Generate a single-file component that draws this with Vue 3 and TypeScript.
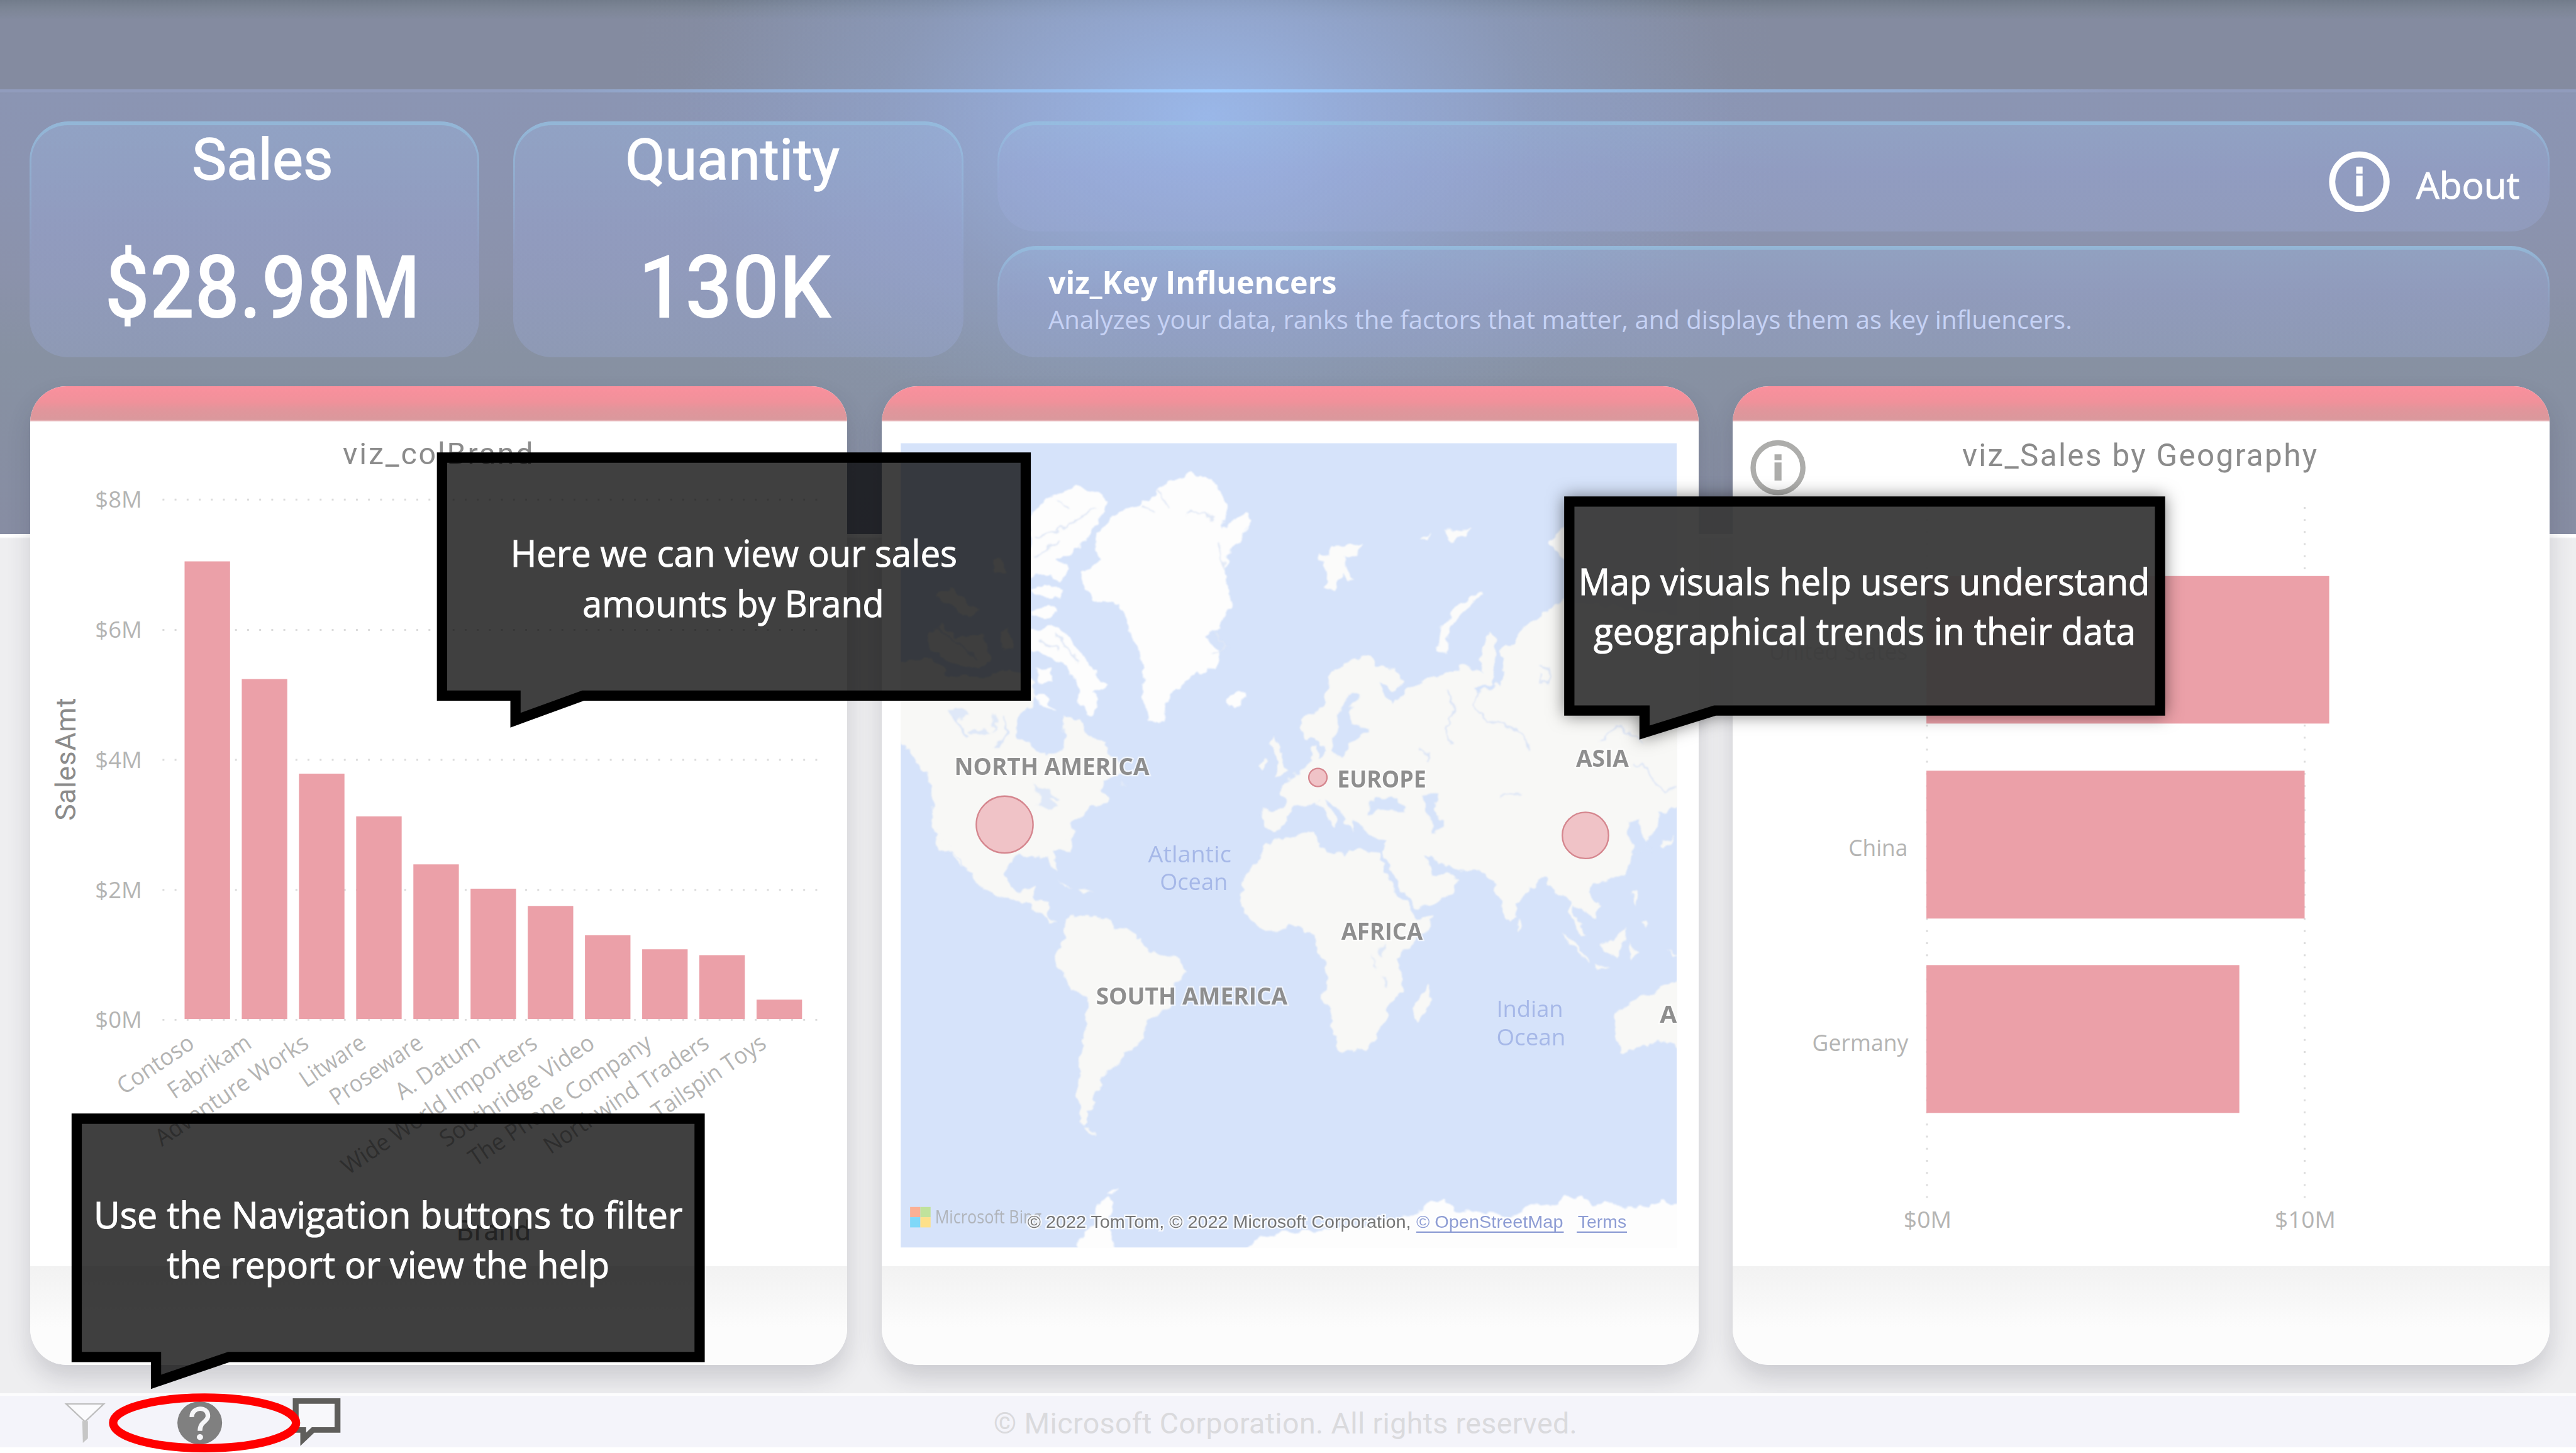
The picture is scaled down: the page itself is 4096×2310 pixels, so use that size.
<script setup lang="ts">
interface Label {
  t: string
  x: number
  y: number
  w: number
}
interface Callout {
  d: string
  cls: string
  lines: Label[]
}

// Advance widths, in em, for the slanted category labels
const advance: Record<string, number> = {
  C: 0.619, F: 0.488, W: 0.934, P: 0.56, T: 0.524, A: 0.645, D: 0.701, I: 0.266, S: 0.531, V: 0.621, N: 0.748, L: 0.471,
  a: 0.509, b: 0.588, c: 0.462, d: 0.588, e: 0.523, g: 0.588, h: 0.565, i: 0.242, k: 0.497, l: 0.242, m: 0.861, n: 0.565,
  o: 0.586, p: 0.588, r: 0.348, s: 0.424, t: 0.339, u: 0.565, v: 0.479, w: 0.723, y: 0.484, ' ': 0.274, '.': 0.217,
}
const widthOf = (t: string, size: number): number =>
  [...t].reduce((sum, ch) => sum + (advance[ch] ?? 0.55), 0) * size

const brands: { name: string; top: number }[] = [
  { name: 'Contoso', top: 959 },
  { name: 'Fabrikam', top: 1160 },
  { name: 'Adventure Works', top: 1321.5 },
  { name: 'Litware', top: 1394.5 },
  { name: 'Proseware', top: 1476.5 },
  { name: 'A. Datum', top: 1518 },
  { name: 'Wide World Importers', top: 1547.5 },
  { name: 'Southridge Video', top: 1597.5 },
  { name: 'The Phone Company', top: 1621.5 },
  { name: 'Northwind Traders', top: 1631.5 },
  { name: 'Tailspin Toys', top: 1707.5 },
]
const ticks: { t: string; y: number }[] = [
  { t: '$8M', y: 853.5 },
  { t: '$6M', y: 1076 },
  { t: '$4M', y: 1298 },
  { t: '$2M', y: 1520 },
  { t: '$0M', y: 1742 },
]

const countries: { label: Label; y: number; w: number; h: number }[] = [
  { label: { t: 'United States', x: 3022, y: 1127, w: 237 }, y: 984, w: 688, h: 252 },
  { label: { t: 'China', x: 3158, y: 1462, w: 101 }, y: 1316.5, w: 646, h: 252.5 },
  { label: { t: 'Germany', x: 3096, y: 1795, w: 164 }, y: 1648.5, w: 534.5, h: 252.5 },
]

const continents: Label[] = [
  { t: 'NORTH AMERICA', x: 1630, y: 1324, w: 333 },
  { t: 'EUROPE', x: 2284, y: 1345, w: 152 },
  { t: 'ASIA', x: 2692, y: 1310, w: 90 },
  { t: 'AFRICA', x: 2291, y: 1605.5, w: 139 },
  { t: 'SOUTH AMERICA', x: 1872, y: 1716, w: 327 },
  { t: 'A', x: 2835, y: 1747, w: 29 },
]
const oceans: Label[] = [
  { t: 'Atlantic', x: 1961, y: 1472.5, w: 142 },
  { t: 'Ocean', x: 1981, y: 1520, w: 116 },
  { t: 'Indian', x: 2556, y: 1737.5, w: 114 },
  { t: 'Ocean', x: 2556, y: 1785.5, w: 118 },
]
const bubbles = [
  { x: 1716, y: 1408.5, r: 48.5 },
  { x: 2251, y: 1328, r: 15.5 },
  { x: 2708, y: 1427, r: 39.5 },
]

const callouts: Callout[] = [
  {
    cls: 'plain',
    d: 'M755 781.5H1752V1188H996L880.5 1230V1188H755Z',
    lines: [
      { t: 'Here we can view our sales', x: 872, y: 968, w: 763 },
      { t: 'amounts by Brand', x: 995, y: 1054, w: 515 },
    ],
  },
  {
    cls: 'raised',
    d: 'M2680.5 856.5H3689.5V1213.5H2929L2809 1251V1213.5H2680.5Z',
    lines: [
      { t: 'Map visuals help users understand', x: 2696, y: 1016.5, w: 976 },
      { t: 'geographical trends in their data', x: 2722, y: 1101, w: 926 },
    ],
  },
  {
    cls: 'plain',
    d: 'M131 1910.5H1195V2317.5H391L266.5 2360V2317.5H131Z',
    lines: [
      { t: 'Use the Navigation buttons to filter', x: 160, y: 2098, w: 1006 },
      { t: 'the report or view the help', x: 285, y: 2183, w: 756 },
    ],
  },
]
</script>

<template>
  <div class="report">
    <header class="topbar"></header>

    <section class="summary">
      <div class="glass kpi">
        <svg viewBox="50 207 768 403">
          <text class="din kpi-name" x="327" y="305.500" textLength="241" lengthAdjust="spacingAndGlyphs">Sales</text>
          <text class="din kpi-value" x="178" y="542" textLength="539" lengthAdjust="spacingAndGlyphs">$28.98M</text>
        </svg>
      </div>
      <div class="glass kpi">
        <svg viewBox="877 207 768 403">
          <text class="din kpi-name" x="1068" y="305.500" textLength="366" lengthAdjust="spacingAndGlyphs">Quantity</text>
          <text class="din kpi-value" x="1090" y="542" textLength="330" lengthAdjust="spacingAndGlyphs">130K</text>
        </svg>
      </div>
      <div class="banners">
        <div class="glass banner">
          <svg viewBox="1702 207 2653 188">
            <circle cx="4030" cy="310" r="46.5" fill="none" stroke="#fff" stroke-width="10.5" />
            <path d="M4024.5 284h11v12h-11zM4024.5 299.500h11v35.500h-11z" fill="#fff" />
            <text class="ui bright" x="4127" y="339.500" font-size="63" textLength="177" lengthAdjust="spacingAndGlyphs">About</text>
          </svg>
        </div>
        <div class="glass banner">
          <svg viewBox="1702 420 2653 190">
            <text class="ui" x="1789" y="502" font-size="54" font-weight="700" fill="#fff" textLength="493" lengthAdjust="spacingAndGlyphs">viz_Key Influencers</text>
            <text class="ui" x="1789" y="562" font-size="44" fill="#c6d2f5" textLength="1750" lengthAdjust="spacingAndGlyphs">Analyzes your data, ranks the factors that matter, and displays them as key influencers.</text>
          </svg>
        </div>
      </div>
    </section>

    <main class="cards">
      <article class="card">
        <div class="stripe"></div>
        <svg class="body" viewBox="52 720 1395 1442">
          <text class="din" x="586" y="793" font-size="52" fill="#8b8b8b" textLength="325" lengthAdjust="spacing">viz_colBrand</text>
          <g v-for="k in ticks" :key="k.t">
            <line x1="278" :y1="k.y" x2="1398" :y2="k.y" class="grid" />
            <text class="ui tick" x="163" :y="k.y + 14" textLength="80" lengthAdjust="spacingAndGlyphs">{{ k.t }}</text>
          </g>
          <text class="din" transform="translate(129 1402) rotate(-90)" font-size="48" fill="#8b8b8b" textLength="210" lengthAdjust="spacing">SalesAmt</text>
          <g v-for="(b, i) in brands" :key="b.name">
            <rect :x="315.7 + i * 97.7" :y="b.top" width="77.700" :height="1740.5 - b.top" fill="#eba0a8" />
            <text
              class="ui tick"
              :transform="`translate(${335 + i * 97.7} 1788) rotate(-34) translate(${-widthOf(b.name, 40)} 0)`"
              :textLength="widthOf(b.name, 40)"
              lengthAdjust="spacingAndGlyphs"
            >{{ b.name }}</text>
          </g>
          <text class="din" x="780" y="2119" font-size="48" fill="#8b8b8b" textLength="127" lengthAdjust="spacing">Brand</text>
        </svg>
        <div class="base"></div>
      </article>

      <article class="card">
        <div class="stripe"></div>
        <svg class="body" viewBox="1506 720 1395 1442">
          <defs>
            <clipPath id="frame"><rect x="1538.500" y="757" width="1325.500" height="1374" /></clipPath>
            <filter id="coast" x="-5%" y="-5%" width="110%" height="110%">
              <feTurbulence type="fractalNoise" baseFrequency="0.06" numOctaves="2" seed="4" result="n" />
              <feDisplacementMap in="SourceGraphic" in2="n" scale="17" xChannelSelector="R" yChannelSelector="G" />
              <feGaussianBlur stdDeviation="1.2" />
            </filter>
          </defs>
          <g clip-path="url(#frame)">
            <rect x="1538" y="757" width="1326" height="1374" fill="#d6e3fa" />
            <g filter="url(#coast)" fill="#f8f8f6">
              <!-- North America and the Arctic -->
              <g transform="translate(1500 740) scale(.4464)">
                <path d="M60 880L200 860L260 920L400 940L500 900L600 950L590 1040L545 1070L528 1120L535 1160L590 1200L640 1230L690 1232L715 1200L705 1090L770 1095L800 1160L870 1180L890 1230L935 1295L900 1310L860 1330L850 1370L882 1400L820 1430L790 1460L745 1490L738 1600H235L210 1510L205 1350L180 1290L130 1240L100 1190L60 1130Z" />
                <path d="M190 780L240 730L300 780L400 770L430 860L400 900L300 890L200 820ZM220 620L280 590L330 640L390 680L340 700ZM460 760L490 740L520 820L480 830ZM440 490L470 480L490 530L450 540Z" />
                <path d="M580 300L650 250L750 205L830 220L885 260L850 320L790 410L740 460L690 480L735 520L700 565L660 540L580 545ZM590 600L640 580L705 605L690 625L600 620ZM590 680L660 655L685 685L640 708L590 700ZM580 750L700 745L740 800L800 870L840 940L880 970L820 990L842 1050L820 1080L770 1030L765 960L710 880L640 850L580 830ZM600 900L650 895L668 950L620 960ZM590 1000L640 1000L675 1060L640 1045Z" fill="#fdfdfd" />
                <path d="M1145 180L1200 150L1280 185L1325 240L1335 310L1310 370L1400 310L1435 330L1390 400L1335 470L1330 570L1352 660L1310 730L1250 780L1312 850L1290 900L1200 930L1115 1000L1090 1105L1035 1100L1015 1010L1010 860L965 760L945 690L900 640L825 645L790 590L770 535L850 490L830 410L900 310L1000 270L1060 240L1090 190ZM1330 1010L1380 985L1410 1010L1360 1055L1335 1045Z" fill="#fdfdfd" />
                <path d="M590 1350L640 1360L690 1395L660 1400L690 1440L650 1450L610 1420L625 1390ZM270 1060L330 1055L360 1075L290 1105ZM340 1140L400 1130L440 1150L350 1155ZM440 1065L455 1120L445 1150ZM925 1330L960 1345L935 1355Z" fill="#dfe8f8" />
                <path d="M210 740L380 860M480 1080L500 1150L440 1200M290 1090L340 1170" fill="none" stroke="#dbe5f8" stroke-width="9" />
                <path d="M600 400L690 370L760 330L830 290M600 470L650 440L700 410M690 250L730 290M1075 220L1110 290M1010 280L1060 310M1290 330L1230 300L1180 310M1330 520L1300 420M1290 760L1330 820L1270 850M610 790L690 830M680 770L760 870" fill="none" stroke="#dfe7f6" stroke-width="6" />
              </g>
              <g transform="translate(1500 1400) scale(.4464 .4974)">
                <path d="M208 -40L210 0L240 60L290 110L340 170L380 215L410 240L470 265L520 275L570 290L620 315L660 350L690 358L645 330L648 290L610 280L590 275L605 225L570 235L540 252L505 235L488 190L500 140L540 120L600 130L650 130L670 170L686 177L670 110L720 60L748 0V-40ZM680 203L745 238L720 232ZM765 240L800 238L825 248L780 250ZM280 100L325 160L300 145Z" />
                <path d="M710 350L740 330L800 330L870 340L920 375L990 390L1020 440L1080 465L1140 470L1182 515L1150 550L1125 580L1120 640L1030 690L1020 730L980 790L935 800L942 820L910 850L880 860L850 890L850 920L820 950L832 975L800 1010L800 1045L768 1042L765 940L775 800L795 700L803 620L740 580L700 520L680 480L690 440L717 400ZM800 1050L828 1085L805 1075Z" />
                <path d="M745 1490L800 1410L835 1380L840 1320L875 1297L905 1320L890 1360L885 1410L908 1490ZM870 1290L920 1255L900 1285ZM1425 1490L1440 1440L1600 1420V1490Z" fill="#fdfdfd" />
              </g>
              <!-- Europe and northern Asia -->
              <g transform="translate(2150 740) scale(.4783 .4464)">
                <path d="M10 1440L90 1440L95 1400L75 1350L150 1290L190 1255L185 1210L205 1195L215 1240L240 1215L200 1165L175 1175L155 1150L150 1100L230 1050L240 980L270 900L330 870L400 850L420 890L480 900L520 950L490 985L430 960L450 1000L480 1030L520 990L600 940L700 910L730 885L800 920L790 860L825 755L847 800L845 900L830 960L860 960L880 900L860 820L920 810L930 750L1000 700L1090 640L1520 700V1430L1430 1450L1425 1500L1380 1570L1350 1600H440L460 1560L420 1550L375 1520L340 1480L330 1525L300 1450L235 1400L285 1475L270 1510L210 1410L130 1430L110 1450L90 1500L60 1525L20 1510ZM55 1165L75 1210L105 1290L60 1315L70 1260L40 1200ZM18 1245L35 1255L20 1292L3 1270Z" />
                <path d="M212 460L250 470L270 430L375 425L350 475L300 470L310 505L345 560L320 565L300 540L265 600L240 590L245 540ZM580 410L615 380L610 410ZM670 365L700 380L765 365L720 405L680 420ZM640 830L650 750L700 670L800 600L802 615L710 700L675 770L675 845ZM1035 420L1070 365L1110 370V480L1070 470Z" fill="#fbfbfa" />
                <path d="M330 990L280 1080L285 1140L270 1170L265 1215L285 1240L322 1210L325 1185L400 1140L370 1120L330 1120L325 1060L355 1010ZM385 1460L420 1385L450 1400L480 1385L530 1450L450 1468ZM585 1390L640 1380L625 1440L660 1480L655 1530L610 1525L600 1450ZM1310 1490L1360 1480L1375 1540L1400 1600H1320ZM770 970L840 960L845 975L785 985Z" fill="#d6e3fa" />
                <path d="M780 980L775 1040L810 1100L880 1115L960 1170L965 1210M1000 890L1040 900L1030 960L1000 950L1005 920M670 980L700 1060L670 1130L690 1190M570 1210L610 1230L600 1260M860 1390L930 1385M1220 1180L1280 1120L1380 1180M1340 1265L1380 1270L1410 1330L1450 1370L1490 1350" fill="none" stroke="#dce5f6" stroke-width="6" />
              </g>
              <!-- Africa, southern Asia, Australia and Antarctica -->
              <g transform="translate(2150 1400) scale(.4783 .4974)">
                <path d="M-62 240L-52 190L8 130L22 90L60 65L190 50L210 65L215 95L305 125L320 100L430 115L450 180L500 260L540 305L560 340L622 330L600 380L540 430L500 480L512 590L460 630L462 680L435 700L410 770L380 790L290 797L270 740L250 650L225 600L247 560L240 500L205 450L200 400L160 370L110 360L60 385L22 387L-24 350L-65 300ZM614 568L605 640L575 695L548 685L560 620Z" />
                <path d="M375 15L420 -30H600L625 45L660 20L655 -30H1310L1320 50L1342 120L1300 190L1190 220L1180 250L1222 300L1200 335L1170 320L1125 295L1125 320L1165 400L1150 400L1110 320L1110 280L1060 250L1020 190L920 290L915 330L895 357L855 270L840 215L790 175L700 170L650 155L610 120L590 120L625 190L680 185L712 205L690 250L640 280L555 307L520 250L455 150L440 110L470 45L420 40ZM925 342L940 365L925 374ZM1088 383L1185 490L1160 475L1110 425ZM1193 498L1255 508L1200 514ZM1218 430L1260 420L1308 370L1305 400L1285 470L1240 460ZM1335 240L1350 250L1345 300L1335 280ZM1370 350L1397 355L1382 374ZM1322 420L1360 450L1330 480ZM1455 445L1500 465L1480 470ZM1380 -10L1410 45L1395 50ZM1435 80L1490 60L1445 100Z" />
                <path d="M1520 550L1440 570L1420 600L1360 610L1270 670L1275 720L1290 800L1360 785L1420 760L1470 768L1520 800Z" />
                <path d="M425 440L455 430L440 470ZM405 460L410 500L435 515L405 505ZM445 530L465 570L450 570Z" fill="#dfe8f8" />
                <path d="M-70 1490L0 1435L100 1415L350 1400L500 1370L600 1330L660 1300L700 1340L800 1350L900 1360L990 1320L1070 1325L1085 1295L1160 1300L1200 1325L1250 1310L1300 1330L1400 1330L1440 1310L1520 1312V1490Z" fill="#fdfdfd" />
              </g>
            </g>
            <g class="ui continent">
              <text v-for="c in continents" :key="c.t" :x="c.x" :y="c.y" :textLength="c.w" lengthAdjust="spacingAndGlyphs">{{ c.t }}</text>
            </g>
            <g class="ui ocean">
              <text v-for="(c, i) in oceans" :key="i" :x="c.x" :y="c.y" :textLength="c.w" lengthAdjust="spacingAndGlyphs">{{ c.t }}</text>
            </g>
            <circle v-for="b in bubbles" :key="b.x" :cx="b.x" :cy="b.y" :r="b.r" fill="#f0c3c7" stroke="#d5868e" stroke-width="2.500" />
            <g>
              <rect x="1554.500" y="2061.500" width="17.500" height="17.500" fill="#fbb094" />
              <rect x="1572" y="2061.500" width="17.500" height="17.500" fill="#c0e29c" />
              <rect x="1554.500" y="2079" width="17.500" height="17.500" fill="#80d8f8" />
              <rect x="1572" y="2079" width="17.500" height="17.500" fill="#fde08a" />
              <text class="ui" x="1597" y="2090" font-size="31" fill="#b0b4ba" textLength="182" lengthAdjust="spacingAndGlyphs">Microsoft Bing</text>
            </g>
            <g class="credits">
              <text x="1755" y="2097.500" fill="#767676" textLength="655" lengthAdjust="spacingAndGlyphs">© 2022 TomTom, © 2022 Microsoft Corporation,</text>
              <text x="2419" y="2097.500" fill="#8e9dd4" textLength="251" lengthAdjust="spacingAndGlyphs">© OpenStreetMap</text>
              <text x="2695" y="2097.500" fill="#8e9dd4" textLength="83" lengthAdjust="spacingAndGlyphs">Terms</text>
              <path d="M2419 2104.500h252M2693 2104.500h86" stroke="#8e9dd4" stroke-width="2.500" />
            </g>
          </g>
        </svg>
        <div class="base"></div>
      </article>

      <article class="card">
        <div class="stripe"></div>
        <svg class="body" viewBox="2960 720 1395 1442">
          <circle cx="3037.500" cy="799" r="42.500" fill="none" stroke="#adadab" stroke-width="9" />
          <path d="M3031.500 776h12v10h-12zM3031.500 790h12v31h-12z" fill="#adadab" />
          <text class="din" x="3352" y="796" font-size="53" fill="#8b8b8b" textLength="606" lengthAdjust="spacing">viz_Sales by Geography</text>
          <line class="grid" x1="3292" y1="866" x2="3292" y2="2050" />
          <line class="grid" x1="3937" y1="866" x2="3937" y2="2050" />
          <g v-for="c in countries" :key="c.label.t">
            <rect x="3291" :y="c.y" :width="c.w" :height="c.h" fill="#eba0a8" />
            <text class="ui tick" :x="c.label.x" :y="c.label.y" :textLength="c.label.w" lengthAdjust="spacingAndGlyphs">{{ c.label.t }}</text>
          </g>
          <text class="ui tick" x="3252" y="2097" textLength="82" lengthAdjust="spacingAndGlyphs">$0M</text>
          <text class="ui tick" x="3886" y="2097" textLength="104" lengthAdjust="spacingAndGlyphs">$10M</text>
        </svg>
        <div class="base"></div>
      </article>
    </main>

    <footer class="footer">
      <svg viewBox="0 2384 4400 89">
        <g transform="translate(60 2340) scale(.3571 .3333)">
          <path d="M148 174H328L238 265Z" fill="#fbfbfd" stroke="#bdbdbd" stroke-width="7" />
          <path d="M225 262H252V350L228 374Z" fill="#c6c6c6" />
          <ellipse cx="787" cy="271" rx="107" ry="110" fill="#808080" />
          <path d="M749 241C748 188 826 182 826 236C826 266 788 262 788 312" fill="none" stroke="#f6f6f8" stroke-width="22" />
          <circle cx="788" cy="344" r="15" fill="#f6f6f8" />
          <path d="M1246 159H1446V307H1329L1282 355V307H1246Z" fill="#f8f8fb" stroke="#5f5e5b" stroke-width="28" />
        </g>
        <ellipse cx="349.300" cy="2430.300" rx="156.200" ry="43.200" fill="none" stroke="#f00" stroke-width="14.200" />
        <text class="din" x="1697" y="2449" font-size="50" fill="#dadadd" textLength="997" lengthAdjust="spacing">© Microsoft Corporation. All rights reserved.</text>
      </svg>
    </footer>

    <svg class="callouts" viewBox="0 0 4400 2481">
      <g v-for="c in callouts" :key="c.d" :class="c.cls">
        <path :d="c.d" />
        <text v-for="l in c.lines" :key="l.t" class="ui bright" :x="l.x" :y="l.y" :textLength="l.w" lengthAdjust="spacingAndGlyphs">{{ l.t }}</text>
      </g>
    </svg>
  </div>
</template>

<style>
html,
body {
  margin: 0;
  background: #fff;
  overflow: hidden;
}
</style>

<style scoped>
.report {
  zoom: 0.930909;
  position: relative;
  display: flex;
  flex-direction: column;
  width: 4400px;
  height: 2482px;
  overflow: hidden;
  background:
    radial-gradient(ellipse 900px 560px at 2060px 200px, rgba(156, 188, 240, 0.85), rgba(154, 180, 230, 0.62) 30%, rgba(148, 172, 218, 0.3) 62%, rgba(145, 165, 200, 0) 100%) 0 0 / 4400px 912px no-repeat,
    radial-gradient(ellipse 1000px 800px at 2060px 200px, rgba(148, 175, 220, 0.22), rgba(145, 165, 200, 0)) 0 0 / 4400px 912px no-repeat,
    linear-gradient(#727c8b 0, #7c8595 14px, #848ba0 34px, #848ba0 152px, #8b95b3 160px, #8b94b1 300px, #8b92ab 470px, #8791a2 610px, #878da3 912px) 0 0 / 4400px 912px no-repeat,
    linear-gradient(#fff 912px, #fff 917px, #eeeef0 920px, #eeeef0 2379px, #fff 2379px);
}
svg {
  display: block;
  width: 100%;
  height: 100%;
}
.ui {
  font-family: 'Open Sans', 'Noto Sans', sans-serif;
}
.bright {
  fill: #fff;
  stroke: #fff;
  stroke-width: 1.1px;
}
.tick {
  font-size: 40px;
  font-weight: 400;
  fill: #b4b4b3;
}
.din {
  font-family: Roboto, 'Liberation Sans', sans-serif;
}
.topbar {
  flex: none;
  display: flex;
  align-items: flex-end;
  height: 158px;
}
.topbar::after {
  content: '';
  width: 100%;
  height: 6px;
  background: linear-gradient(90deg, #919cbd 0, #919cbd 20%, #94b4de 30%, #98c0f0 40%, #a0ccff 47%, #98c4f4 54%, #94b8e0 64%, #93acd2 74%, #919cbd 82%);
}
.summary {
  flex: none;
  display: flex;
  gap: 58px;
  height: 403px;
  margin: 49px 45px 0 50px;
}
.kpi {
  width: 769px;
}
.banners {
  flex: 1;
  display: flex;
  flex-direction: column;
  gap: 25px;
}
.banner {
  flex: 1;
}
.glass {
  position: relative;
  border-radius: 66px;
  background: linear-gradient(rgba(155, 185, 225, 0.38), rgba(155, 170, 220, 0.36) 45%, rgba(155, 170, 215, 0.34));
}
.glass::after {
  content: '';
  position: absolute;
  inset: 0;
  border-radius: inherit;
  border: 4px solid rgba(148, 196, 228, 0.6);
  border-top-width: 7px;
  -webkit-mask: linear-gradient(#000, transparent 60%);
  mask: linear-gradient(#000, transparent 60%);
}
.kpi-name {
  font-size: 97px;
  font-weight: 400;
  fill: #fff;
  stroke: #fff;
  stroke-width: 1.5px;
}
.kpi-value {
  font-size: 150px;
  font-weight: 500;
  fill: #fff;
}
.cards {
  flex: none;
  display: flex;
  gap: 59px;
  height: 1671px;
  margin: 50px 45px 0 52px;
}
.card {
  flex: 1;
  display: flex;
  flex-direction: column;
  overflow: hidden;
  border-radius: 62px;
  background: #fff;
  box-shadow: 0 22px 40px rgba(40, 40, 60, 0.17);
}
.stripe {
  flex: none;
  height: 60px;
  background: linear-gradient(#fa909d, #f0919a 45%, #e2959b 65%, #da989c 57px, #f0c8cb);
}
.body {
  flex: none;
  height: 1442px;
}
.base {
  flex: 1;
  background: linear-gradient(#f2f2f2, #f8f8f8 40%, #fcfcfc 62%);
}
.grid {
  stroke: #dcdcdc;
  stroke-width: 3.2;
  stroke-dasharray: 3.2 17.45;
}
.continent {
  font-size: 41px;
  font-weight: 700;
  fill: #8e8e8e;
  paint-order: stroke;
  stroke: rgba(255, 255, 255, 0.6);
  stroke-width: 5px;
}
.ocean {
  font-size: 40px;
  font-weight: 500;
  fill: #a6b8e8;
}
.credits text {
  font-family: 'Liberation Sans', Arial, sans-serif;
  font-size: 30px;
  paint-order: stroke;
  stroke: rgba(255, 255, 255, 0.75);
  stroke-width: 5px;
}
.footer {
  flex: none;
  height: 89px;
  margin-top: 48px;
  border-top: 5px solid #fcfcfd;
  background: #f4f4fa;
}
.footer svg {
  overflow: visible;
}
.callouts {
  position: absolute;
  top: 0;
  left: 0;
  width: 4400px;
  height: 2481px;
}
.callouts path {
  fill: rgba(0, 0, 0, 0.75);
  stroke: #000;
  stroke-width: 17.5px;
  stroke-miterlimit: 10;
}
.callouts text {
  font-size: 63px;
}
.callouts .raised path {
  fill: rgba(60, 60, 60, 0.92);
  filter: drop-shadow(0 0 14px rgba(0, 0, 0, 0.5));
}
</style>
